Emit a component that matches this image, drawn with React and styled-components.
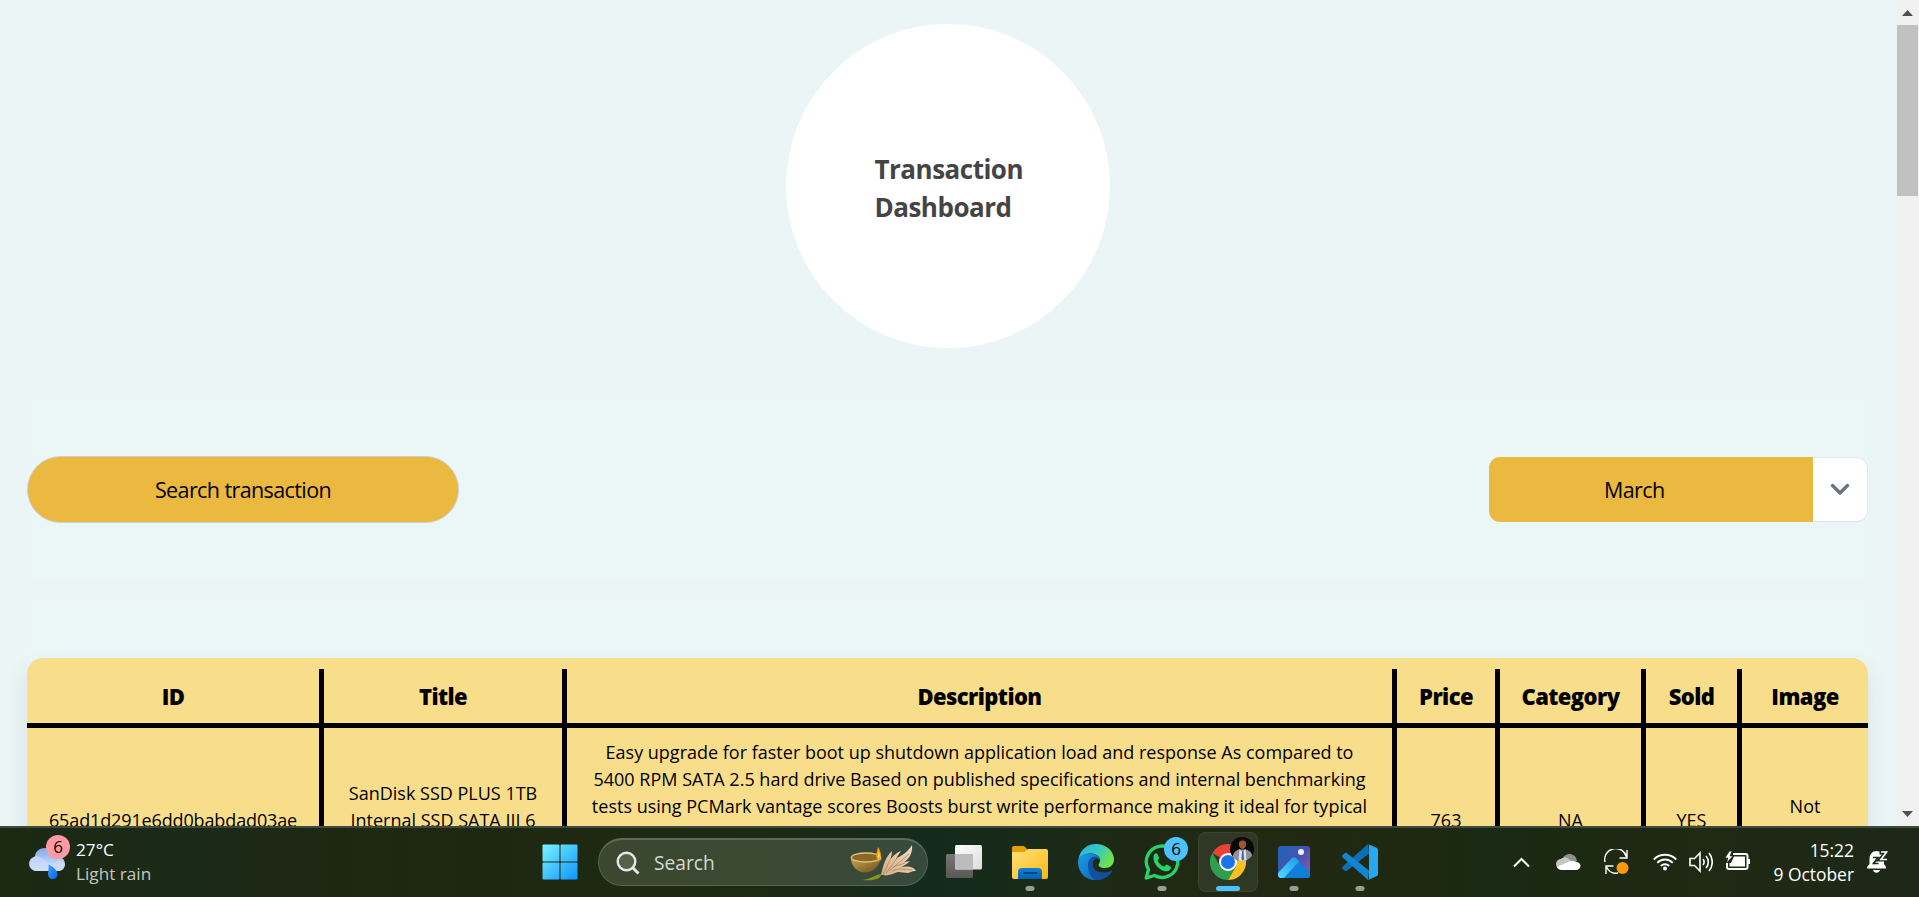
import React from "react";
import styled, { createGlobalStyle, css } from "styled-components";

const UI = `"Open Sans", "Noto Sans", sans-serif`;

const GlobalStyle = createGlobalStyle`
  *, *::before, *::after { box-sizing: border-box; }
  body { margin: 0; overflow: hidden; font-family: ${UI}; color: #000; }
  svg { display: block; flex: none; }
`;

const Screen = styled.div`
  display: flex;
  flex-direction: column;
  width: 1919px;
  height: 897px;
  overflow: hidden;
`;

const Viewport = styled.div`
  display: flex;
  height: 826px;
  overflow: hidden;
`;

const Page = styled.main`
  flex: 1;
  height: 826px;
  padding: 24px 28px 0 27px;
  overflow: hidden;
  background: #ebf5f6;
`;

const TitleCircle = styled.header`
  display: flex;
  align-items: center;
  width: 324px;
  height: 324px;
  margin: 0 auto;
  padding: 3px 0 0 89px;
  border-radius: 50%;
  background: #fff;
`;

const Heading = styled.h1`
  margin: 0;
  width: 160px;
  font-size: 26px;
  line-height: 38px;
  font-weight: 700;
  letter-spacing: -0.5px;
  color: #444;
`;

const Controls = styled.section`
  display: flex;
  justify-content: space-between;
  align-items: center;
  height: 178px;
  margin-top: 52px;
  background: #ebf7f7;
`;

const SearchField = styled.div`
  display: flex;
  align-items: center;
  justify-content: center;
  width: 432px;
  height: 67px;
  border: 1px solid #cbcfd3;
  border-radius: 34px;
  background: #ebb840;
  font-size: 21.5px;
  letter-spacing: -0.6px;
`;

const Select = styled.div`
  display: flex;
  width: 379px;
  height: 65px;
  border-radius: 11px;
  overflow: hidden;
`;

const SelectValue = styled.div`
  display: flex;
  align-items: center;
  width: 324px;
  padding-left: 115px;
  background: #ebb840;
  font-size: 21.5px;
  letter-spacing: -0.6px;
`;

const SelectToggle = styled.div`
  flex: 1;
  display: flex;
  align-items: center;
  justify-content: center;
  border: 1px solid #e4e6ec;
  border-left: 0;
  border-radius: 0 11px 11px 0;
  background: #fff;
`;

const TableSection = styled.section`
  margin-top: 22px;
  padding-top: 58px;
  background: #ebf7f7;
`;

const Table = styled.div`
  width: 1841px;
  height: 300px;
  border-radius: 16px 16px 0 0;
  background: #f8de8b;
  box-shadow: 0 10px 22px rgba(60, 90, 110, 0.12);
`;

const columns = css`
  display: grid;
  grid-template-columns: 297px 243px 830px 103px 146px 96px 126px;
`;

const HeadRow = styled.div`
  ${columns}
  height: 70px;
  padding-top: 11px;
  border-bottom: 5px solid #000;
`;

const BodyRow = styled.div`
  ${columns}
  height: 200px;
`;

const HeadCell = styled.div`
  display: flex;
  align-items: center;
  justify-content: center;
  border-right: ${(p) => (p.$last ? 0 : 5)}px solid #000;
  font-size: 22px;
  font-weight: 800;
  line-height: 54px;
  letter-spacing: -0.6px;
`;

const Cell = styled.div`
  display: flex;
  flex-direction: column;
  align-items: center;
  padding-top: ${(p) => p.$top}px;
  border-right: ${(p) => (p.$last ? 0 : 5)}px solid #000;
  font-size: 18px;
  line-height: 27px;
  white-space: nowrap;
`;

const Line = styled.span`
  display: block;
  letter-spacing: ${(p) => p.$track || 0}px;
`;

const Scrollbar = styled.div`
  display: flex;
  flex-direction: column;
  align-items: center;
  justify-content: space-between;
  width: 23px;
  height: 826px;
  padding: 10px 0 9px;
  background: #f0f0f0;
`;

const Thumb = styled.div`
  width: 21px;
  height: 171px;
  margin: 9px 0 auto;
  background: #c1c1c1;
`;

const Taskbar = styled.footer`
  display: flex;
  height: 71px;
  border-top: 2px solid #3f4b3b;
  background: linear-gradient(90deg, #1c2913 0, #1b2a18 180px, #1f2811 420px, #1d2a14 760px, #142b1c 930px, #1c2a16 1090px, #222813 1240px, #1f2912 1400px, #1a2a14 1480px, #1f2914 1700px, #1d2817 1919px);
  color: #fff;
`;

const Weather = styled.div`
  display: flex;
  flex: none;
  width: 530px;
  padding: 7px 0 0 28px;
  gap: 4px;
`;

const WeatherText = styled.div`
  display: flex;
  flex-direction: column;
  font-size: 17.2px;
  line-height: 24px;
  padding-top: 3px;
`;

const Muted = styled.span`
  color: #c4c8c2;
`;

const Apps = styled.nav`
  display: flex;
  gap: 6px;
  padding-top: 4px;
`;

const AppButton = styled.div`
  position: relative;
  display: flex;
  align-items: center;
  justify-content: center;
  width: 60px;
  height: 60px;
  border-radius: 8px;
  ${(p) => p.$active && "background: #2f3825; box-shadow: inset 0 0 0 1px #3a4330;"}
`;

const Indicator = styled.span`
  position: absolute;
  bottom: 1px;
  left: 50%;
  width: ${(p) => (p.$active ? 24 : 9)}px;
  height: 5px;
  transform: translateX(-50%);
  border-radius: 3px;
  background: ${(p) => (p.$active ? "#4cc2ff" : "#989e93")};
`;

const Badge = styled.span`
  position: absolute;
  top: 5px;
  right: 4px;
  width: 24px;
  height: 24px;
  border-radius: 50%;
  background: ${(p) => p.$color};
  color: #000;
  font-size: 17px;
  line-height: 24px;
  text-align: center;
`;

const WeatherIcon = styled.div`
  position: relative;
  width: 44px;
  height: 50px;
`;

const WeatherBadge = styled(Badge)`
  top: 0;
  right: 2px;
`;

const TaskSearch = styled.div`
  display: flex;
  align-items: center;
  width: 330px;
  height: 48px;
  margin: 6px 0 0 2px;
  padding: 0 9px 0 17px;
  border: 1px solid #56634f;
  border-top: 2px solid #5f6b5a;
  border-radius: 24px;
  background: linear-gradient(90deg, #3b482f, #3c4934 55%, #364a3d);
  color: #d5d8d2;
  font-size: 19.2px;
`;

const SearchLabel = styled.span`
  flex: 1;
  padding-left: 14px;
`;

const Tray = styled.div`
  display: flex;
  flex: none;
  align-items: center;
  gap: 23.5px;
  width: 406px;
  margin-left: auto;
  padding-bottom: 1px;
`;

const TrayGroup = styled.div`
  display: flex;
  gap: ${(p) => p.$gap}px;
  align-items: center;
`;

const Clock = styled.div`
  display: flex;
  flex-direction: column;
  align-items: flex-end;
  width: 81px;
  font-size: 17.4px;
  line-height: 24px;
  white-space: nowrap;
`;

const WeatherGlyph = () => (
  <svg width="38" height="44" viewBox="0 0 38 44">
    <defs>
      <linearGradient id="wc" x1="0" y1="0" x2="0" y2="1"><stop offset="0" stopColor="#7fa9ee" /><stop offset="1" stopColor="#dfe9fb" /></linearGradient>
      <linearGradient id="wd" x1="0" y1="0" x2="1" y2="1"><stop offset="0" stopColor="#3fa2ff" /><stop offset="1" stopColor="#0a63e6" /></linearGradient>
    </defs>
    <path d="M8 36a7.500 7.500 0 0 1-1-14.500C7.500 16 12 13 17 13s9.500 3 10.500 8.500C34 21 37 25 37 29s-3 7-7 7z" fill="url(#wc)" />
    <path d="M8 36a7.300 7.300 0 1 1 4-13.500c4 1 6 6 11 6s6-6 12-2c3 4 1 9.500-5 9.500z" fill="#c9dafa" opacity=".75" />
    <path d="M20.500 29.500c4 2 9 5.500 9 10a4.700 4.700 0 0 1-9.400 0c0-3 .8-6 .4-10z" fill="url(#wd)" />
  </svg>
);

const StartGlyph = () => (
  <svg width="36" height="36" viewBox="0 0 36 36">
    <defs><linearGradient id="st" gradientUnits="userSpaceOnUse" x1="0" y1="0" x2="36" y2="36"><stop offset="0" stopColor="#7df3ff" /><stop offset="1" stopColor="#0a94ff" /></linearGradient></defs>
    <g fill="url(#st)">
      <rect x="0.500" y="0.500" width="17" height="17" rx="1" /><rect x="18.500" y="0.500" width="17" height="17" rx="1" />
      <rect x="0.500" y="18.500" width="17" height="17" rx="1" /><rect x="18.500" y="18.500" width="17" height="17" rx="1" />
    </g>
  </svg>
);

const LensGlyph = () => (
  <svg width="24" height="24" viewBox="0 0 24 24" fill="none" stroke="#e6e8ea" strokeWidth="2.400">
    <circle cx="10.500" cy="10.500" r="8.800" fill="#545f4c" /><path d="M17 17l5.500 5.500" strokeWidth="3" />
  </svg>
);

const DiyaGlyph = () => (
  <svg width="68" height="36" viewBox="0 0 68 36">
    <defs>
      <linearGradient id="bowl" x1="0" y1="0" x2="1" y2="1"><stop offset="0" stopColor="#c9a655" /><stop offset="1" stopColor="#6a4a14" /></linearGradient>
      <linearGradient id="feather" x1="0" y1="1" x2="1" y2="0"><stop offset="0" stopColor="#d6ab80" /><stop offset="1" stopColor="#f3dfc8" /></linearGradient>
    </defs>
    <path d="M1 13c0 8 6 14.500 14 14.500S28 22 30 16l2.500-2z" fill="url(#bowl)" />
    <ellipse cx="16" cy="12.500" rx="14.800" ry="4.500" fill="#8b672a" stroke="#dfc176" strokeWidth="1.300" />
    <path d="M27 14c-1.500-4 0-7 1-12 3 5 4 9 1.500 12z" fill="#ff9d0a" /><path d="M28 13c-.5-2 0-4 .6-6 1.500 3 1.500 4.500.3 6z" fill="#ffe14a" />
    <path d="M31 30C33 22 35 12 42 6c0 4-1 6-2 9 4-5 6-7 11-9-3 4-4 6-5 8 6-4 12-7 16-14 1 8-3 14-8 17l6-1c-3 3-6 5-9 6 6-1 12-1 15 4-4 0-5 1-8 2-6 0-9-2-13 0-5 2-9 3-12 2z" fill="url(#feather)" />
    <path d="M33 30l7-15M36 28l12-16M39 26l20-17M42 26c7-3 12-2 20-1M43 22l12-4" stroke="#a98461" strokeWidth=".8" fill="none" />
    <path d="M12 35c9-1 14-6 20-6l-3 4c-5 2.500-10 2.500-17 2z" fill="#8a9414" />
  </svg>
);

const TaskViewGlyph = () => (
  <svg width="36" height="36" viewBox="0 0 36 36">
    <defs>
      <linearGradient id="tv" x1="0" y1="0" x2="1" y2="1"><stop offset="0" stopColor="#fff" /><stop offset="1" stopColor="#dcdcdc" /></linearGradient>
      <linearGradient id="tw" x1="0" y1="0" x2="0" y2="1"><stop offset="0" stopColor="#777" /><stop offset="1" stopColor="#585858" /></linearGradient>
    </defs>
    <rect y="10" width="27" height="24" rx="1.500" fill="url(#tw)" />
    <rect x="9" y="1" width="27" height="24.500" rx="1.500" fill="url(#tv)" />
    <path d="M9 10h18v15.500H10.500A1.500 1.500 0 0 1 9 24z" fill="#bcbcbc" />
  </svg>
);

const FolderGlyph = () => (
  <svg width="36" height="36" viewBox="0 0 36 36">
    <defs>
      <linearGradient id="fo" x1="0" y1="0" x2="1" y2="1"><stop offset="0" stopColor="#ffe27a" /><stop offset="1" stopColor="#fdb813" /></linearGradient>
      <linearGradient id="fb" x1="0" y1="0" x2="0" y2="1"><stop offset="0" stopColor="#1181d8" /><stop offset="1" stopColor="#0b5fae" /></linearGradient>
    </defs>
    <path d="M0 4a2 2 0 0 1 2-2h10l4 4h5v8H0z" fill="#e3a008" />
    <path d="M0 8h12.500L16 5h18a2 2 0 0 1 2 2v26a2 2 0 0 1-2 2H2a2 2 0 0 1-2-2z" fill="url(#fo)" />
    <path d="M6 35v-7a4 4 0 0 1 4-4h16a4 4 0 0 1 4 4v7z" fill="url(#fb)" />
    <path d="M11.500 29h13" stroke="#0a4787" strokeWidth="1.800" strokeLinecap="round" />
  </svg>
);

const EdgeGlyph = () => (
  <svg width="36" height="36" viewBox="0 0 36 36">
    <defs>
      <linearGradient id="e1" x1="0" y1="0" x2="1" y2=".5"><stop offset="0" stopColor="#2bb0e8" /><stop offset=".55" stopColor="#36c9c4" /><stop offset="1" stopColor="#6ee247" /></linearGradient>
      <linearGradient id="e2" x1="0" y1="0" x2="1" y2="1"><stop offset="0" stopColor="#1b9de2" /><stop offset="1" stopColor="#0f62c0" /></linearGradient>
    </defs>
    <path d="M0.500 15C2 6 9 0 18 0c10 0 18 7 18 15.500 0 5-4 8.500-9 8.500-4.500 0-6.500-1.700-6.500-3 0-1 1.500-2 1.500-5 0-4-4.500-6.500-9.500-6.500C7 9.500 2.500 12 .5 15z" fill="url(#e1)" />
    <path d="M0 18c0-5 5-8.500 11-8.500 6.500 0 11 3 11 6.500-2-3-7.500-2.500-7.500 3.500 0 7 5 11 9 12.500-2 2.500-4 4-6.500 4C7 36 0 28 0 18z" fill="url(#e2)" />
    <path d="M10 21c0-5 3-8.500 6.500-8.500 2 0 4 .8 5 2.500-4-1.500-7 1-7 5 0 5 4.500 8.500 11 8.500 3.500 0 6-1 7.500-2 .8-.3 1.300.4.8 1.200C30.500 33 25 36 19 36c-5 0-9-7-9-15z" fill="#11509f" />
  </svg>
);

const WhatsAppGlyph = () => (
  <svg width="36" height="36" viewBox="0 0 36 36">
    <path d="M2.200 34l2.300-8.300A15.700 15.700 0 1 1 10.500 31.500z" fill="none" stroke="#25d366" strokeWidth="3.300" strokeLinejoin="round" />
    <path d="M10 10.500c1-1.500 3-1.500 3.600-.2l1.500 3.500c.2.800-1.600 2.300-1.300 3.100 1.300 2.500 3.300 4.500 6.200 5.700.8.200 1.900-2 2.700-2l3.700 1.800c1.500 1 0 4-2.800 4.800C17 28.500 7 19 10 10.500z" fill="#25d366" />
  </svg>
);

const ChromeGlyph = () => (
  <svg width="36" height="36" viewBox="0 0 36 36">
    <path d="M18 18L2.400 9A18 18 0 0 1 33.600 9z" fill="#ea4335" />
    <path d="M18 9h15.600A18 18 0 0 1 18 36l7.800-13.500z" fill="#fcc21b" />
    <path d="M10.200 22.500L2.400 9A18 18 0 0 0 18 36l7.800-13.500z" fill="#2f9e4f" />
    <circle cx="18" cy="18" r="9" fill="#fff" /><circle cx="18" cy="18" r="7" fill="#1a73e8" />
  </svg>
);

const AvatarSvg = styled.svg`
  position: absolute;
  top: 5px;
  right: 4px;
`;

const Avatar = () => (
  <AvatarSvg width="24" height="24" viewBox="0 0 24 24">
    <defs><clipPath id="av"><circle cx="12" cy="12" r="12" /></clipPath></defs>
    <g clipPath="url(#av)">
      <rect width="24" height="24" fill="#0b0908" />
      <path d="M2 24c0-8 4-11 7-11.500h7c4 1 7 4 7 11.500z" fill="#8e9197" />
      <path d="M9.500 12l3 3 3-3 1 12h-8z" fill="#dfe4ee" /><path d="M12 14h1.500l.8 8-1.500 2-1.400-2z" fill="#4f6aa8" />
      <ellipse cx="12.500" cy="7" rx="3.600" ry="5" fill="#9a5638" /><path d="M8.800 5c.5-5 7-5 7.500 0-2-2-5-2-7.500 0z" fill="#1b0f0b" />
    </g>
  </AvatarSvg>
);

const PhotosGlyph = () => (
  <svg width="32" height="32" viewBox="0 0 32 32">
    <defs>
      <linearGradient id="p1" x1="0" y1="0" x2="1" y2="1"><stop offset="0" stopColor="#1b65bd" /><stop offset=".5" stopColor="#4454ad" /><stop offset="1" stopColor="#a155b8" /></linearGradient>
      <linearGradient id="p2" x1="0" y1="1" x2="1" y2="0"><stop offset="0" stopColor="#58dcff" /><stop offset="1" stopColor="#1a9be8" /></linearGradient>
      <clipPath id="pc"><rect width="32" height="32" rx="3" /></clipPath>
    </defs>
    <g clipPath="url(#pc)">
      <rect width="32" height="32" fill="url(#p1)" />
      <path d="M4 32l12-15 3-4 14 14v5z" fill="#0f7fda" />
      <path d="M-1 28L13.500 12.500a3.500 3.500 0 0 1 5 0L21 15.500 5 33H-1z" fill="url(#p2)" />
    </g>
    <circle cx="23" cy="6" r="3" fill="#f2efff" />
  </svg>
);

const CodeGlyph = () => (
  <svg width="36" height="36" viewBox="0 0 36 36">
    <path d="M26 0L.7 22.500c-.8.800-.8 1.700 0 2.400l2 1.900c.6.500 1.400.5 2 .1L27 9.500z" fill="#0b70b8" />
    <path d="M26 36L.7 13.500c-.8-.8-.8-1.700 0-2.400l2-1.900c.6-.5 1.400-.5 2-.1L27 26.500z" fill="#1286d0" />
    <path d="M26 36c-.8.300-1 0-1.500-.4.900.9 2.500.2 2.500-1.100v-33C27 .2 25.400-.4 24.500.4 25 0 25.300-.2 26 0l9 4a2 2 0 0 1 1 1.800v24.400a2 2 0 0 1-1 1.800z" fill="#27a8f2" />
  </svg>
);

const CaretGlyph = () => (
  <svg width="19" height="11" viewBox="0 0 19 11" fill="none" stroke="#fff" strokeWidth="2"><path d="M1 9.500L8.500 2 16 9.500" /></svg>
);

const CloudGlyph = () => (
  <svg width="25" height="18" viewBox="0 0 25 18">
    <path d="M6 8C7 3 10 1 13.500 1S20 3 21 8l-5 4z" fill="#8c9189" />
    <path d="M5 16a5 5 0 0 1 0-10c2-2 6-2 8 0l8 9z" fill="#c3c6c1" />
    <path d="M5.500 17c-2 0-4-1-4.500-3l12-5.500c2-1 5-1 6.500.5 3.500 0 5 2 5 4s-2 4-4.500 4z" fill="#fff" />
  </svg>
);

const SyncGlyph = () => (
  <svg width="25" height="26" viewBox="0 0 25 26" fill="none" stroke="#fff" strokeWidth="1.400">
    <path d="M1 13A11 11 0 0 1 22.500 8M23 1v8h-7.500M2 25v-8h7.500M2.500 18C5 23 9 25 14 24" />
    <circle cx="18.500" cy="19" r="6" fill="#ff9a0a" stroke="none" />
  </svg>
);

const WifiGlyph = () => (
  <svg width="24" height="20" viewBox="0 0 24 20" fill="none" stroke="#fff" strokeWidth="1.900">
    <path d="M.8 7.500a15.500 15.500 0 0 1 22.400 0M4.300 10.800a10.700 10.700 0 0 1 15.400 0M7.800 14a6 6 0 0 1 8.400 0" /><circle cx="12" cy="16.500" r="2" fill="#fff" stroke="none" />
  </svg>
);

const SpeakerGlyph = () => (
  <svg width="24" height="22" viewBox="0 0 24 22" fill="none" stroke="#fff" strokeWidth="1.600">
    <path d="M1 7.500h4.500L11 2v18l-5.500-5.500H1zM14 8a5 5 0 0 1 0 6M17 5a9 9 0 0 1 0 12M20 2a14 14 0 0 1 0 18" />
  </svg>
);

const BatteryGlyph = () => (
  <svg width="25" height="22" viewBox="0 0 25 22">
    <path d="M8 3h12.500q2 0 2 2v11q0 2-2 2H4q-2 0-2-2v-4" fill="none" stroke="#fff" strokeWidth="2" />
    <path d="M9 5.500h11v10H4.500V12H6z" fill="#fff" /><rect x="22.500" y="8" width="2.500" height="5" fill="#fff" />
    <path d="M4.500 0L0 7h3l-1.500 5L8 5H5L7 0z" fill="#fff" stroke="#1d2817" strokeWidth=".6" />
  </svg>
);

const BellGlyph = () => (
  <svg width="22" height="24" viewBox="0 0 22 24">
    <path d="M2.500 9c0-5 3-8 7-8s7.500 3 7.500 8v5l2 3v1.500H0V17l2.500-3zM6 20h7c-.8 3.500-6.200 3.500-7 0z" fill="#fff" />
    <path d="M12.500 2.500h7L13 9.500h7" fill="none" stroke="#1d2817" strokeWidth="4" />
    <path d="M6 7.500h5l-4.500 6h5" fill="none" stroke="#1d2817" strokeWidth="1.700" />
    <path d="M14 2h5.500L14 9.500h6" fill="none" stroke="#fff" strokeWidth="1.700" />
  </svg>
);

const Arrow = ({ up }) => (
  <svg width="11" height="6" viewBox="0 0 11 6"><path d={up ? "M5.500 0L11 6H0z" : "M0 0h11L5.500 6z"} fill="#505050" /></svg>
);

const HEADERS = ["ID", "Title", "Description", "Price", "Category", "Sold", "Image"];

export default function App() {
  return (
    <Screen>
      <GlobalStyle />
      <Viewport>
        <Page>
          <TitleCircle><Heading>Transaction Dashboard</Heading></TitleCircle>
          <Controls>
            <SearchField>Search transaction</SearchField>
            <Select>
              <SelectValue>March</SelectValue>
              <SelectToggle>
                <svg width="20" height="13" viewBox="0 0 20 13" fill="none" stroke="#6b7280" strokeWidth="3.400" strokeLinecap="round" strokeLinejoin="round"><path d="M2.500 2.500l7.500 7.500 7.500-7.500" /></svg>
              </SelectToggle>
            </Select>
          </Controls>
          <TableSection>
            <Table>
              <HeadRow>
                {HEADERS.map((h) => (
                  <HeadCell key={h} $last={h === "Image"}>{h}</HeadCell>
                ))}
              </HeadRow>
              <BodyRow>
                <Cell $top={79}><Line $track={-0.13}>65ad1d291e6dd0babdad03ae</Line></Cell>
                <Cell $top={52}><Line>SanDisk SSD PLUS 1TB</Line><Line>Internal SSD SATA III 6</Line></Cell>
                <Cell $top={11}>
                  <Line>Easy upgrade for faster boot up shutdown application load and response As compared to</Line>
                  <Line>5400 RPM SATA 2.5 hard drive Based on published specifications and internal benchmarking</Line>
                  <Line>tests using PCMark vantage scores Boosts burst write performance making it ideal for typical</Line>
                </Cell>
                <Cell $top={79}>763</Cell>
                <Cell $top={79}>NA</Cell>
                <Cell $top={79}>YES</Cell>
                <Cell $top={65} $last>Not</Cell>
              </BodyRow>
            </Table>
          </TableSection>
        </Page>
        <Scrollbar><Arrow up /><Thumb /><Arrow /></Scrollbar>
      </Viewport>
      <Taskbar>
        <Weather>
          <WeatherIcon><WeatherGlyph /><WeatherBadge $color="#ff99a4">6</WeatherBadge></WeatherIcon>
          <WeatherText><span>27°C</span><Muted>Light rain</Muted></WeatherText>
        </Weather>
        <Apps>
          <AppButton><StartGlyph /></AppButton>
          <TaskSearch><LensGlyph /><SearchLabel>Search</SearchLabel><DiyaGlyph /></TaskSearch>
          <AppButton><TaskViewGlyph /></AppButton>
          <AppButton><FolderGlyph /><Indicator /></AppButton>
          <AppButton><EdgeGlyph /></AppButton>
          <AppButton><WhatsAppGlyph /><Badge $color="#4cc2ff">6</Badge><Indicator /></AppButton>
          <AppButton $active><ChromeGlyph /><Avatar /><Indicator $active /></AppButton>
          <AppButton><PhotosGlyph /><Indicator /></AppButton>
          <AppButton><CodeGlyph /><Indicator /></AppButton>
        </Apps>
        <Tray>
          <CaretGlyph />
          <CloudGlyph />
          <SyncGlyph />
          <TrayGroup $gap={12}><WifiGlyph /><SpeakerGlyph /><BatteryGlyph /></TrayGroup>
          <TrayGroup $gap={13}>
            <Clock><span>15:22</span><span>9 October</span></Clock>
            <BellGlyph />
          </TrayGroup>
        </Tray>
      </Taskbar>
    </Screen>
  );
}
